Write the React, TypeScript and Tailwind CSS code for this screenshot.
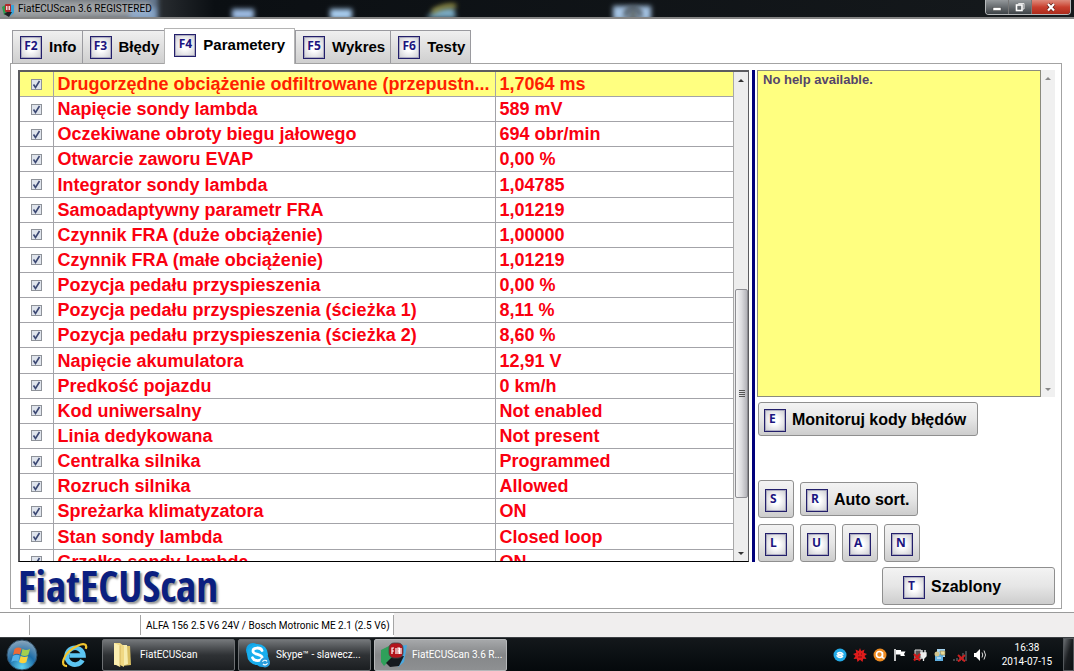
import type { ReactNode } from "react";

const UI_FONT = "font-['Roboto','Open_Sans',sans-serif]";

const rows: [string, string][] = [
  ["Drugorzędne obciążenie odfiltrowane (przepustn...", "1,7064 ms"],
  ["Napięcie sondy lambda", "589 mV"],
  ["Oczekiwane obroty biegu jałowego", "694 obr/min"],
  ["Otwarcie zaworu EVAP", "0,00 %"],
  ["Integrator sondy lambda", "1,04785"],
  ["Samoadaptywny parametr FRA", "1,01219"],
  ["Czynnik FRA (duże obciążenie)", "1,00000"],
  ["Czynnik FRA (małe obciążenie)", "1,01219"],
  ["Pozycja pedału przyspieszenia", "0,00 %"],
  ["Pozycja pedału przyspieszenia (ścieżka 1)", "8,11 %"],
  ["Pozycja pedału przyspieszenia (ścieżka 2)", "8,60 %"],
  ["Napięcie akumulatora", "12,91 V"],
  ["Predkość pojazdu", "0 km/h"],
  ["Kod uniwersalny", "Not enabled"],
  ["Linia dedykowana", "Not present"],
  ["Centralka silnika", "Programmed"],
  ["Rozruch silnika", "Allowed"],
  ["Spreżarka klimatyzatora", "ON"],
  ["Stan sondy lambda", "Closed loop"],
  ["Grzałka sondy lambda", "ON"],
];

const tabs = [
  { keyName: "F2", label: "Info" },
  { keyName: "F3", label: "Błędy" },
  { keyName: "F4", label: "Parametery", active: true },
  { keyName: "F5", label: "Wykres" },
  { keyName: "F6", label: "Testy" },
];

function KeyCap({ children, wide = false }: { children: string; wide?: boolean }) {
  return (
    <span
      className={`flex h-[23px] w-[22px] shrink-0 border border-[#231f6b] bg-radial from-white from-25% to-[#cbcbd0] pt-px font-['Open_Sans',sans-serif] text-[12px] leading-[16px] font-bold text-[#1c1580] ring-1 ring-[#231f6b]/25 ring-inset ${
        wide ? "justify-center" : "pl-[4px]"
      }`}
    >
      {children}
    </span>
  );
}

function KeyButton({ keyName, children, className = "" }: { keyName: string; children?: ReactNode; className?: string }) {
  return (
    <button
      type="button"
      aria-label={children ? undefined : keyName}
      className={`flex items-center rounded-[3px] border border-[#8f8f8f] bg-linear-to-b from-[#f3f3f3] via-[#e6e6e6] to-[#cdcdcd] pt-[2px] text-[16px] font-bold text-black ${className}`}
    >
      <KeyCap>{keyName}</KeyCap>
      {children}
    </button>
  );
}

function Arrow({ up = false, className }: { up?: boolean; className: string }) {
  return (
    <svg viewBox="0 0 6 3" className={`h-[3px] w-[6px] ${className}`} aria-hidden="true">
      <path d={up ? "M0 3 3 0 6 3Z" : "M0 0 3 3 6 0Z"} fill="currentColor" />
    </svg>
  );
}

function TitleBar() {
  return (
    <header className="relative flex h-[19px] shrink-0 items-start justify-between overflow-hidden border-b-2 border-[#858585] bg-linear-to-r from-[#8d9093] via-[#0b0f13] via-20% to-[#15191c]">
      <svg className="absolute inset-0 h-full w-full" aria-hidden="true">
        <defs>
          <filter id="soft" x="-30%" y="-50%" width="160%" height="200%">
            <feGaussianBlur stdDeviation="2.5" />
          </filter>
          <linearGradient id="haze">
            <stop offset="0" stopColor="#8f9294" />
            <stop offset=".7" stopColor="#73797f" />
            <stop offset="1" stopColor="#6f87a5" stopOpacity=".8" />
          </linearGradient>
        </defs>
        <g filter="url(#soft)">
          <rect x="-10" y="-6" width="168" height="32" fill="url(#haze)" />
          <rect x="12" y="3" width="138" height="12" fill="#a3a6a8" />
          <rect x="130" y="8" width="27" height="12" fill="#91b3dc" opacity=".7" />
          <rect x="232" y="9" width="22" height="10" fill="#9dbbe2" />
          <rect x="330" y="9" width="22" height="10" fill="#a9cdf0" />
          <path d="M426 18Q438 6 454 8L456 18Z" fill="#7aabc4" />
          <rect x="613" y="6" width="38" height="14" fill="#a6c4e4" />
          <circle cx="633" cy="14" r="6" fill="#6b7479" />
        </g>
        <g filter="url(#soft)">
          <path d="M432 12Q444 4 456 6" stroke="#c9bd4a" strokeWidth="3" fill="none" />
          <path d="M626 17v-4a7 5 0 0 1 14 0v4" stroke="#454e54" strokeWidth="4" fill="none" />
        </g>
      </svg>
      <div className="relative flex items-center gap-1 pl-[2px]">
        <svg viewBox="0 0 12 14" className="mt-[2px] h-[14px] w-[12px]" aria-hidden="true">
          <path d="M0 4 5 1v8L2 12Z" fill="#2b9b4d" />
          <path d="M9 2h3v8L8 13Z" fill="#3aa4d8" />
          <path d="M2 11 5 9h5l-3 5Z" fill="#1d1f22" />
          <rect x="3" y="1" width="6" height="8" rx="1" fill="#b3292b" />
          <path d="M4.500 3v4M6 3v4M7.500 3v4" stroke="#fff" strokeWidth=".8" />
        </svg>
        <h1 className={`${UI_FONT} text-[10px] leading-[17px] text-black`}>FiatECUScan 3.6 REGISTERED</h1>
      </div>
      <div className="relative mr-[3px] flex h-[15px] overflow-hidden rounded-b-[4px] border border-t-0 border-[#b6b9bb]">
        <button type="button" aria-label="Minimize" className="flex w-[23px] items-center justify-center border-r border-[#777] bg-linear-to-b from-[#94989b] to-[#3e4347]">
          <svg viewBox="0 0 10 10" className="h-[10px] w-[10px]"><rect x="1" y="5.500" width="8" height="3" fill="#fff" stroke="#444" strokeWidth=".5" /></svg>
        </button>
        <button type="button" aria-label="Restore" className="flex w-[23px] items-center justify-center border-r border-[#777] bg-linear-to-b from-[#94989b] to-[#3e4347]">
          <svg viewBox="0 0 10 10" className="h-[10px] w-[10px]" fill="none">
            <path d="M3.500 2V1.500H9V7H8" stroke="#e5e5e5" />
            <rect x="1.500" y="3" width="5.500" height="5.500" stroke="#fff" strokeWidth="1.600" />
          </svg>
        </button>
        <button type="button" aria-label="Close" className="flex w-[38px] items-center justify-center bg-linear-to-b from-[#dd8a7c] via-[#c9402f] to-[#ac2a1b]">
          <svg viewBox="0 0 10 10" className="h-[10px] w-[10px]">
            <path d="m2 2 6 6.500m0-6.500-6 6.500" stroke="#632018" strokeWidth="3.600" />
            <path d="m2 2 6 6.500m0-6.500-6 6.500" stroke="#fff" strokeWidth="2.200" />
          </svg>
        </button>
      </div>
    </header>
  );
}

function Tabs() {
  return (
    <nav className="flex items-end pl-[2px]" role="tablist">
      {tabs.map((tab) => (
        <button
          key={tab.keyName}
          type="button"
          role="tab"
          aria-selected={!!tab.active}
          className={`flex items-center gap-[7px] border border-b-0 text-[15px] font-bold text-black ${
            tab.active
              ? "relative -mb-px h-[36px] border-[#b4b4b4] bg-white pr-[9px] pb-[2px] pl-[9px]"
              : "-mr-px h-[33px] border-[#9a9a9f] bg-linear-to-b from-[#f0f0f0] to-[#cfcfcf] pr-[5px] pl-[7px]"
          }`}
        >
          <KeyCap wide>{tab.keyName}</KeyCap>
          {tab.label}
        </button>
      ))}
    </nav>
  );
}

function ParameterTable() {
  return (
    <div className="flex min-h-0 min-w-0 flex-1 border-2 border-r border-b border-[#5c5c60] border-b-black">
      <div className="min-h-0 flex-1 overflow-hidden">
        <table className="h-[503px] w-full table-fixed border-collapse text-[18px] leading-[20px] font-bold text-[#fa0010]">
          <colgroup>
            <col className="w-[33px]" />
            <col className="w-[62%]" />
            <col />
          </colgroup>
          <tbody>
            {rows.map(([name, value], i) => (
              <tr key={name} className={`border-b border-[#a3a3a8] ${i === 0 ? "bg-[#ffff80] text-[#ff1e00]" : "bg-white"}`}>
                <td className="border-r border-[#a3a3a8] p-0">
                  <span className="grid place-items-center">
                    <input
                      id={`row-${i}`}
                      type="checkbox"
                      defaultChecked
                      className="peer col-start-1 row-start-1 size-[11px] appearance-none border border-[#8e9299] bg-[#dfe4ec]"
                    />
                    <svg viewBox="0 0 9 9" className="pointer-events-none invisible col-start-1 row-start-1 size-[9px] peer-checked:visible" aria-hidden="true">
                      <path d="M1.500 4.500 3.500 7.500 7.500 1" fill="none" stroke="#3b4873" strokeWidth="1.600" />
                    </svg>
                  </span>
                </td>
                <td className="overflow-hidden border-r border-[#a3a3a8] py-0 pr-0 pl-1 whitespace-nowrap">
                  <label htmlFor={`row-${i}`}>{name}</label>
                </td>
                <td className="py-0 pr-0 pl-1 whitespace-nowrap">{value}</td>
              </tr>
            ))}
          </tbody>
        </table>
      </div>
      <div className="flex w-[15px] shrink-0 flex-col border-l border-[#a8a8a8] bg-[#ededed]">
        <button type="button" aria-label="Scroll up" className="flex h-[16px] items-center justify-center">
          <Arrow up className="text-[#333]" />
        </button>
        <div className="flex flex-1 flex-col pl-px">
          <div className="grow-[206]" />
          <div className="flex grow-[205] flex-col items-center justify-center gap-px rounded-[2px] border border-[#8e8e93] bg-linear-to-r from-[#f6f6f6] via-[#dcdcdf] to-[#b3b3b8]">
            <span className="h-px w-[6px] bg-[#555]" />
            <span className="h-px w-[6px] bg-[#555]" />
            <span className="h-px w-[6px] bg-[#555]" />
            <span className="h-px w-[6px] bg-[#555]" />
          </div>
          <div className="grow-[48]" />
        </div>
        <button type="button" aria-label="Scroll down" className="flex h-[16px] items-center justify-center">
          <Arrow className="text-[#333]" />
        </button>
      </div>
    </div>
  );
}

function SidePanel() {
  return (
    <aside className="flex w-[298px] shrink-0 flex-col">
      <div className="flex min-h-0 flex-1">
        <p className="flex-1 border border-[#8b8b7d] bg-[#ffff80] pt-px pl-[5px] text-[13px] leading-[16px] font-bold text-[#54456b]">
          No help available.
        </p>
        <div className="flex w-[14px] flex-col justify-between bg-[#f0f0f0]">
          <button type="button" aria-label="Scroll help up" className="flex h-[16px] items-center justify-center">
            <Arrow up className="text-[#888]" />
          </button>
          <button type="button" aria-label="Scroll help down" className="flex h-[16px] items-center justify-center">
            <Arrow className="text-[#888]" />
          </button>
        </div>
      </div>
      <div className="mt-[5px] flex shrink-0 flex-col items-start pl-px">
        <KeyButton keyName="E" className="h-[34px] gap-[6px] pr-[11px] pl-[5px]">
          <span>Monitoruj kody błędów</span>
        </KeyButton>
        <div className="mt-[44px] flex items-center gap-[6px]">
          <KeyButton keyName="S" className="h-[38px] w-[36px] justify-center" />
          <KeyButton keyName="R" className="h-[34px] gap-[6px] pr-[7px] pl-[5px]">
            <span>Auto sort.</span>
          </KeyButton>
        </div>
        <div className="mt-[6px] flex gap-[6px]">
          {["L", "U", "A", "N"].map((k) => (
            <KeyButton key={k} keyName={k} className="h-[38px] w-[36px] justify-center" />
          ))}
        </div>
      </div>
    </aside>
  );
}

function TaskButton({ icon, label, active = false }: { icon: ReactNode; label: string; active?: boolean }) {
  return (
    <button
      type="button"
      className={`flex h-[32px] w-[133px] items-center rounded-[2px] border text-[10px] whitespace-nowrap text-white ${
        active
          ? "border-[#b5b7b9] bg-linear-to-b from-[#a6a8aa] via-[#858789] to-[#8e9092]"
          : "border-[#6d7073] bg-linear-to-b from-[#74777a] via-[#2f3235] to-[#1b1e21]"
      }`}
    >
      <span className="flex w-[37px] justify-center">{icon}</span>
      {label}
    </button>
  );
}

const FolderIcon = (
  <svg viewBox="0 0 22 26" className="h-[26px] w-[22px]" aria-hidden="true">
    <path d="M10 4h9l1 19-9 1Z" fill="#d9bf63" />
    <path d="M9 3h7l1 19-6 2Z" fill="#f7ecae" />
    <path d="M3 1h6l4 3v21l-4-2H3Z" fill="#f0d883" />
    <path d="M3 1 9 3.500V25l-6-3Z" fill="#fbeeb0" />
    <path d="M9 3.500V25" stroke="#c9a84a" strokeWidth=".7" />
  </svg>
);

const SkypeIcon = (
  <svg viewBox="0 0 26 26" className="h-[26px] w-[26px]" aria-hidden="true">
    <circle cx="8" cy="8" r="7" fill="#12a5e8" />
    <circle cx="17" cy="18" r="7" fill="#12a5e8" />
    <circle cx="12.500" cy="12.500" r="10.500" fill="#18aeee" />
    <path d="M17 8.500C15.500 5 7.800 5.200 8 9.200c.2 3.800 9.200 2.600 9.200 6.400 0 3.800-8.200 4-9.700.1" fill="none" stroke="#fff" strokeWidth="2.800" strokeLinecap="round" />
    <circle cx="20" cy="20.500" r="5" fill="#2c9ddd" />
    <path d="M17.500 19.800c1-2 3.500-2 4.500-.5m.5 2c-1 2-3.500 2-4.500.5" stroke="#fff" strokeWidth="1.200" fill="none" />
  </svg>
);

const EcuIcon = (
  <svg viewBox="0 0 28 26" className="h-[26px] w-[28px]" aria-hidden="true">
    <path d="M1 8 11 3v14l-7 7-3-4Z" fill="#2fa05a" />
    <path d="M19 4l8-1-3 17-6 5Z" fill="#4ba9e0" />
    <path d="M6 21 12 15l12-1-5 10-9 1Z" fill="#171a1f" />
    <rect x="9" y="1" width="14" height="15" rx="5" fill="#b3151c" stroke="#444" strokeWidth=".8" />
    <path d="M12 12V6h2m-2 3h2m2-3v6m2 0V6h1.500v6m-1.500-3h2M21 6v6" stroke="#fff" strokeWidth="1.200" fill="none" />
  </svg>
);

function TrayIcons() {
  return (
    <div className="flex items-center gap-[6px]">
      <svg viewBox="0 0 14 14" className="size-[14px]" aria-hidden="true">
        <circle cx="7" cy="7" r="6.500" fill="#23abe8" />
        <path d="M4 6.300C5 4 8.500 3.800 10 6L4.500 6.500M10 7.800C9 10.200 5.500 10.200 4 8l5.500-.5" stroke="#fff" strokeWidth="1.300" fill="none" />
      </svg>
      <svg viewBox="0 0 14 14" className="size-[14px]" aria-hidden="true">
        <path d="M7 0 8.200 3 11.500 1.500 10.700 4.800 14 6 11.500 8l2 3-3.300-.3L9.500 14 7 11.700 4.500 14l-.7-3.300L.5 11l2-3L0 6l3.300-1.200L2.500 1.500 5.800 3Z" fill="#de1c1c" />
        <path d="M5 6h1m2 0h1M5 9h4" stroke="#7a0808" />
      </svg>
      <svg viewBox="0 0 14 14" className="size-[14px]" aria-hidden="true">
        <circle cx="7" cy="7" r="6.500" fill="#ee8b21" />
        <circle cx="6.500" cy="6.500" r="3" fill="none" stroke="#fff" strokeWidth="1.600" />
        <path d="M9.500 4v5c0 1 1 1.500 2 .8" stroke="#fff" strokeWidth="1.400" fill="none" />
      </svg>
      <svg viewBox="0 0 14 14" className="size-[14px]" aria-hidden="true">
        <path d="M2 1v12" stroke="#fff" strokeWidth="1.500" />
        <path d="M3 2h5v1.500h4.500L11 6l1 2H7.500V6.500H3Z" fill="#fff" />
      </svg>
      <svg viewBox="0 0 14 14" className="size-[14px]" aria-hidden="true">
        <path d="M2 2h6v9H2Z" fill="#555" stroke="#ddd" />
        <path d="M8 5h5v3l-2 2H9Zm1-3v3m3-3v3m-1.500 5v3" fill="#eee" stroke="#eee" strokeWidth="1.300" />
        <path d="m1 6 6 6.500m0-6.500-6 6.500" stroke="#d31818" strokeWidth="2.200" />
      </svg>
      <svg viewBox="0 0 14 14" className="size-[14px]" aria-hidden="true">
        <path d="M4 1h8v8H4Z" fill="#a5d3ee" />
        <path d="M2 6h8v7H2Z" fill="#5fb0e2" />
        <circle cx="4" cy="6" r="2.500" fill="#d3c58e" />
        <path d="M7 3h5v4H8Z" fill="#e8db99" stroke="#857b4c" strokeWidth=".6" />
        <path d="M4 10h4" stroke="#fff" />
      </svg>
      <svg viewBox="0 0 14 14" className="size-[14px]" aria-hidden="true">
        <path d="M1 11v2m3-3v3m3-4v4m3-8v8m3-10v10" stroke="#54585b" strokeWidth="1.500" />
        <path d="m5 7 7 6.500M12 7l-7 6.500" stroke="#cb1e1e" strokeWidth="2" />
      </svg>
      <svg viewBox="0 0 14 14" className="size-[14px]" aria-hidden="true">
        <path d="M1 5h2l4-4v12L3 9H1Z" fill="#fff" />
        <path d="M9 4.500q1.500 2.500 0 5m2-7q3 4.500 0 9" stroke="#ddd" fill="none" />
      </svg>
    </div>
  );
}

function Taskbar() {
  return (
    <footer className={`${UI_FONT} flex h-[34px] shrink-0 items-center justify-between border-t border-[#3b3f43] bg-linear-to-b from-[#14181b] to-[#05090c] text-white`}>
      <div className="flex items-center gap-[3px]">
        <button type="button" aria-label="Start" className="flex w-[44px] justify-center">
          <svg viewBox="0 0 32 32" className="size-[32px]" aria-hidden="true">
            <defs>
              <radialGradient id="orb" cx=".5" cy=".9" r=".9">
                <stop offset="0" stopColor="#5fd3f2" />
                <stop offset=".5" stopColor="#1e6da8" />
                <stop offset="1" stopColor="#8fa9bd" />
              </radialGradient>
            </defs>
            <circle cx="16" cy="16" r="15" fill="url(#orb)" stroke="#2d4a61" />
            <path d="M8.500 10q3.500-2.500 7-.5l-1.500 6q-3.500-1.500-7 .5Z" fill="#ee6a35" />
            <path d="M16.500 10q3.500 2 7.500 0l-1.700 6q-3.500 2-7.300 0Z" fill="#a3cf4f" />
            <path d="M6.800 17q3.500-2 7-.5l-1.500 6q-3.500-1.500-7 .5Z" fill="#56b1e8" />
            <path d="M14.700 17q3.500 2 7.300.3l-1.700 6q-3.500 2-7.300-.3Z" fill="#fbd23c" />
          </svg>
        </button>
        <button type="button" aria-label="Internet Explorer" className="flex w-[52px] justify-center pl-1">
          <svg viewBox="0 0 30 30" className="size-[28px]" aria-hidden="true">
            <path d="M23 20.500A9 9 0 1 1 24 15.500H9" fill="none" stroke="#5cc5f2" strokeWidth="5" />
            <path d="M6.500 27C-2 27 3 15 12 8.500S29 1 26.500 8.500" fill="none" stroke="#f2c52f" strokeWidth="2.400" />
          </svg>
        </button>
        <TaskButton icon={FolderIcon} label="FiatECUScan" />
        <TaskButton icon={SkypeIcon} label="Skype™ - slawecz..." />
        <TaskButton icon={EcuIcon} label="FiatECUScan 3.6 R..." active />
      </div>
      <div className="flex items-center self-stretch">
        <TrayIcons />
        <time dateTime="2014-07-15T16:38" className="mr-[7px] ml-[11px] w-[58px] text-center text-[10px] leading-[14px]">
          16:38
          <br />
          2014-07-15
        </time>
        <button type="button" aria-label="Show desktop" className="h-full w-[11px] border border-[#54585c] bg-linear-to-br from-[#6a6e72] via-[#1b1e21] to-[#0c0f12]" />
      </div>
    </footer>
  );
}

export default function App() {
  return (
    <div className="flex h-screen flex-col overflow-hidden bg-white font-['Liberation_Sans',Arial,sans-serif]">
      <TitleBar />
      <main className="flex min-h-0 flex-1 flex-col pt-[9px] pr-[12px] pb-[3px] pl-[10px]">
        <Tabs />
        <section className="flex min-h-0 flex-1 flex-col border border-[#a3a3a3] pr-[6px] pl-[7px]">
          <div className="flex min-h-0 flex-1 gap-[2px] pt-[6px]">
            <ParameterTable />
            <div className="ml-px w-[3px] shrink-0 bg-[#00007b]" />
            <SidePanel />
          </div>
          <div className="flex h-[46px] shrink-0 items-center justify-between pt-[2px]">
            <p className="font-['Open_Sans_Condensed','Open_Sans',sans-serif] text-[43px] leading-[44px] font-bold text-[#0b1f80] [text-shadow:2px_2px_2px_#999]">
              FiatECUScan
            </p>
            <KeyButton keyName="T" className="h-[38px] w-[173px] gap-[6px] pl-[20px]">
              <span>Szablony</span>
            </KeyButton>
          </div>
        </section>
      </main>
      <div className={`${UI_FONT} flex h-[25px] shrink-0 border-t border-[#9a9a9a] bg-[#f0eeee] text-[10px] text-black`}>
        <div className="flex items-center bg-white py-[2px]">
          <span className="h-full w-[30px] border-r border-[#a5a5a5]" />
          <span className="h-full w-[111px] border-r border-[#a5a5a5]" />
          <span className="flex h-full items-center border-r border-[#a5a5a5] pr-[3px] pl-[5px] whitespace-nowrap">
            ALFA 156 2.5 V6 24V / Bosch Motronic ME 2.1 (2.5 V6)
          </span>
        </div>
      </div>
      <Taskbar />
    </div>
  );
}
